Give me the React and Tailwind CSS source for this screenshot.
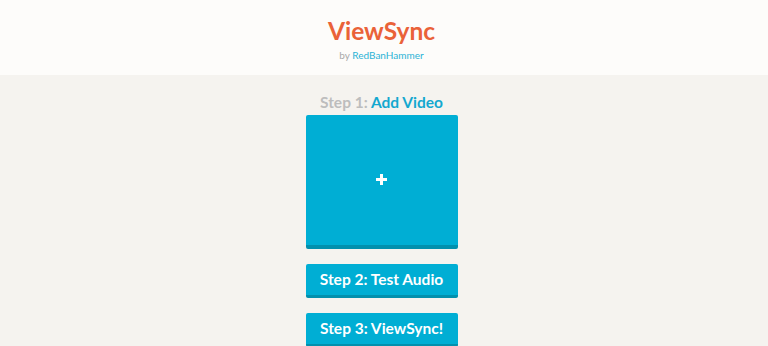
export default function App() {
  return (
    <div className="min-h-[346px] bg-[#f5f3ef] font-['Lato',sans-serif]">
      <header className="h-[75px] bg-[#fdfcfa] flex flex-col items-center pt-[17px] pr-[5px]">
        <h1 className="text-[24.5px] leading-[28px] font-bold text-[#ea6238]">ViewSync</h1>
        <p className="text-[10px] leading-[14px] mt-[3px] text-[#a9a9a9]">
          by <span className="text-[#2bb3d6]">RedBanHammer</span>
        </p>
      </header>
      <main className="flex flex-col items-center pt-[17px] pr-[5px]">
        <div className="text-[15.5px] leading-[20px] font-bold text-[#bdbdbd]">
          Step 1: <span className="text-[#13a8cf]">Add Video</span>
        </div>
        <button className="mt-[3px] w-[152px] h-[134px] bg-[#00aed4] border-b-[4px] border-[#0290ad] rounded-[2px] flex items-start justify-center pt-[59px]">
          <svg width="11" height="11" viewBox="0 0 11 11">
            <rect x="4" y="0" width="3" height="11" fill="#fff" />
            <rect x="0" y="4" width="11" height="3" fill="#fff" />
          </svg>
        </button>
        <button className="mt-[15px] w-[152px] h-[34px] bg-[#00aed4] border-b-[3px] border-[#0290ad] rounded-[2px] text-white text-[15.5px] font-bold">
          Step 2: Test Audio
        </button>
        <button className="mt-[15px] w-[152px] h-[34px] bg-[#00aed4] border-b-[3px] border-[#0290ad] rounded-[2px] text-white text-[15.5px] font-bold">
          Step 3: ViewSync!
        </button>
      </main>
    </div>
  )
}
